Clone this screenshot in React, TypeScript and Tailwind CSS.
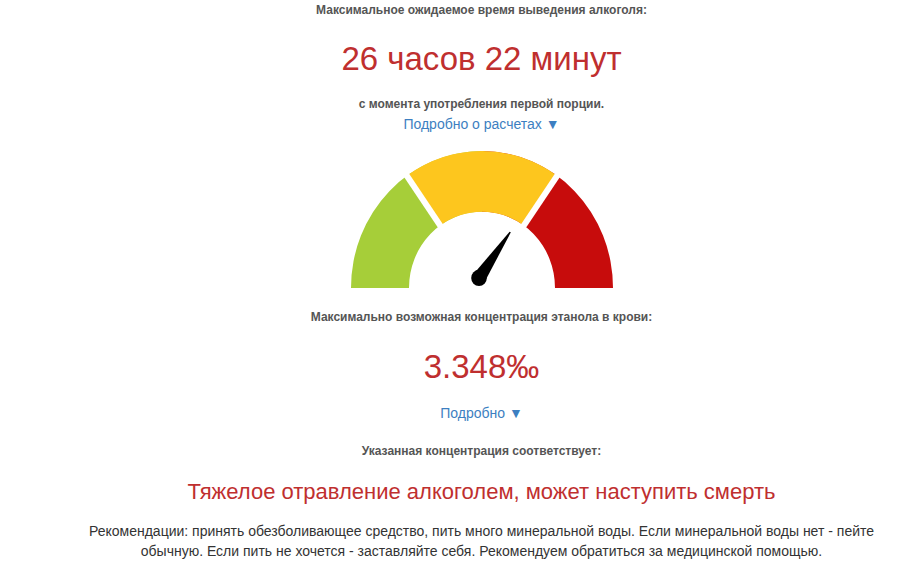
import React from "react";

const GREEN = "#a6ce39";
const YELLOW = "#fdc61e";
const RED = "#c70c0c";

function sector(r1: number, r2: number, a1: number, a2: number) {
  const rad = (a: number) => (a * Math.PI) / 180;
  const p = (r: number, a: number) => `${(r * Math.cos(rad(a))).toFixed(2)} ${(-r * Math.sin(rad(a))).toFixed(2)}`;
  return `M ${p(r2, a1)} A ${r2} ${r2} 0 0 0 ${p(r2, a2)} L ${p(r1, a2)} A ${r1} ${r1} 0 0 1 ${p(r1, a1)} Z`;
}

function Gauge() {
  const R = 131;
  const r = 73;
  const gap = (a: number) => {
    const c = Math.cos((a * Math.PI) / 180);
    const s = -Math.sin((a * Math.PI) / 180);
    return <line x1={c * (r - 5)} y1={s * (r - 5)} x2={c * (R + 5)} y2={s * (R + 5)} stroke="#fff" strokeWidth={6} />;
  };
  return (
    <svg width={262} height={137} viewBox="-131 -131 262 131" preserveAspectRatio="none" className="block">
      <path d={sector(r, R, 0, 90)} fill={RED} />
      <path d={sector(r, R, 90, 180)} fill={GREEN} />
      <path d={sector(r, R, 55, 125)} fill={YELLOW} />
      {gap(125)}
      {gap(55)}
      {/* needle */}
      <path d="M 2.6 -5.8 L 28.8 -53.2 L 27.6 -53.8 L -8.6 -13.2 Z" fill="#000" />
      <circle cx={-3} cy={-9.6} r={7.8} fill="#000" />
    </svg>
  );
}

export default function App() {
  return (
    <div className="w-[909px] h-[577px] bg-white pl-[54px] overflow-hidden" style={{ fontFamily: '"Liberation Sans", Arial, sans-serif' }}>
      <div className="flex flex-col items-center text-center">
        <div className="text-[12px] leading-[20px] font-bold text-[#555]">Максимальное ожидаемое время выведения алкоголя:</div>
        <div className="mt-[19px] text-[33px] leading-[40px] text-[#bf2f2f]">26 часов 22 минут</div>
        <div className="mt-[15px] text-[12px] leading-[20px] font-bold text-[#555]">с момента употребления первой порции.</div>
        <div className="text-[14px] leading-[20px] text-[#3d7fc1]">Подробно о расчетах ▼</div>
        <div className="mt-[17px]">
          <Gauge />
        </div>
        <div className="mt-[19px] text-[12px] leading-[20px] font-bold text-[#555]">Максимально возможная концентрация этанола в крови:</div>
        <div className="mt-[20px] text-[33px] leading-[40px] text-[#bf2f2f]">3.348‰</div>
        <div className="mt-[16px] text-[14px] leading-[20px] text-[#3d7fc1]">Подробно ▼</div>
        <div className="mt-[18px] text-[12px] leading-[20px] font-bold text-[#555]">Указанная концентрация соответствует:</div>
        <div className="mt-[16px] text-[22px] leading-[30px] text-[#bf2f2f]">Тяжелое отравление алкоголем, может наступить смерть</div>
        <div className="mt-[14px] max-w-[800px] text-[14px] leading-[20px] text-[#333]">
          Рекомендации: принять обезболивающее средство, пить много минеральной воды. Если минеральной воды нет - пейте обычную. Если пить не хочется - заставляйте себя. Рекомендуем обратиться за медицинской помощью.
        </div>
      </div>
    </div>
  );
}
